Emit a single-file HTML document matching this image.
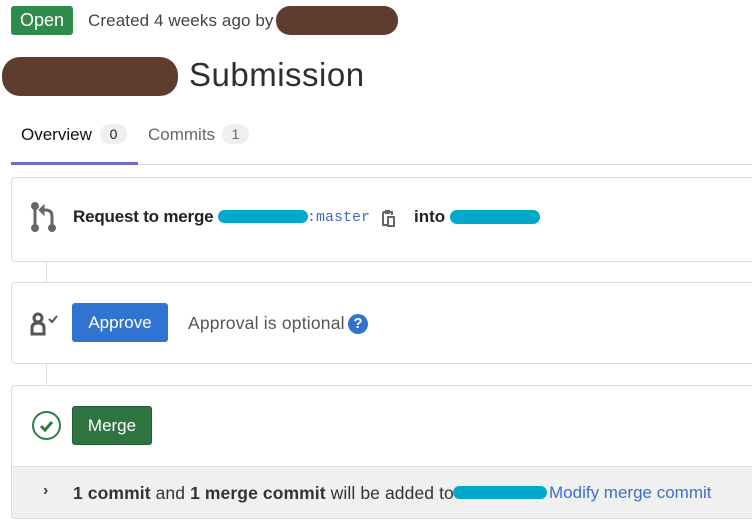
<!DOCTYPE html>
<html><head><meta charset="utf-8"><style>
body{margin:0;width:752px;height:523px;background:#fff;font-family:"Liberation Sans",sans-serif;position:relative;overflow:hidden;color:#2e2e2e}
.a{position:absolute;white-space:nowrap}
.card{position:absolute;left:11px;width:760px;border:1px solid #dcdcdc;border-radius:4px;background:#fff}
</style></head><body>
<div class="a" style="left:11px;top:6px;width:62px;height:29px;background:#2f8a4c;border-radius:3px;color:#fff;font-size:18px;line-height:29px;text-align:center">Open</div>
<div class="a" style="left:88px;top:11px;font-size:17px;color:#444;letter-spacing:0.1px">Created 4 weeks ago by</div>
<div class="a" style="left:276px;top:6px;width:122px;height:29px;background:#5e3c30;border-radius:14px"></div>
<div class="a" style="left:2px;top:57px;width:176px;height:39px;background:#5e3c30;border-radius:18px"></div>
<div class="a" style="left:189px;top:56px;font-size:33px;color:#2e2e2e;letter-spacing:0.5px">Submission</div>
<div class="a" style="left:21px;top:125px;font-size:17px;color:#111">Overview</div>
<div class="a" style="left:100px;top:124px;width:27px;height:20px;background:#efefef;border-radius:10px;font-size:14px;line-height:20px;text-align:center;color:#222">0</div>
<div class="a" style="left:148px;top:125px;font-size:17px;color:#666">Commits</div>
<div class="a" style="left:222px;top:124px;width:27px;height:20px;background:#efefef;border-radius:10px;font-size:14px;line-height:20px;text-align:center;color:#666">1</div>
<div class="a" style="left:11px;top:164px;width:741px;height:1px;background:#ddd"></div>
<div class="a" style="left:11px;top:162px;width:127px;height:3px;background:#6e6acc"></div>

<div class="card" style="top:177px;height:83px"></div>
<svg class="a" style="left:30px;top:202px" width="28" height="30" viewBox="0 0 28 30"><g stroke="#666" stroke-width="3" fill="#666" stroke-linecap="round"><line x1="5" y1="4" x2="5" y2="26"/><circle cx="5" cy="4" r="2.5"/><circle cx="5" cy="26" r="2.5"/><path d="M22 26V14Q22 8 15 8" fill="none"/><circle cx="22" cy="26" r="2.5"/><path d="M14 3L14 13L9 8Z" stroke-width="1"/></g></svg>
<div class="a" style="left:73px;top:207px;font-size:17px;font-weight:bold;color:#222;letter-spacing:-0.2px">Request to merge</div>
<div class="a" style="left:218px;top:210px;width:90px;height:13px;background:#00a8cc;border-radius:7px"></div>
<div class="a" style="left:307px;top:209px;font-family:'Liberation Mono',monospace;font-size:15px;color:#3b6fc4">:master</div>
<svg class="a" style="left:380px;top:208px" width="16" height="20"><path d="M3 4h3M10 4h2v3M3 4v13h4" stroke="#666" stroke-width="2" fill="none"/><rect x="5" y="2" width="5" height="4" fill="#666"/><rect x="8" y="9" width="6" height="9" stroke="#666" stroke-width="2" fill="none"/></svg>
<div class="a" style="left:414px;top:207px;font-size:17px;font-weight:bold;color:#222">into</div>
<div class="a" style="left:450px;top:210px;width:90px;height:14px;background:#00a8cc;border-radius:7px"></div>

<div class="a" style="left:46px;top:261px;width:1px;height:21px;background:#ddd"></div>
<div class="card" style="top:282px;height:80px"></div>
<svg class="a" style="left:30px;top:312px" width="30" height="24"><circle cx="8" cy="6" r="4" fill="none" stroke="#555" stroke-width="3"/><path d="M2 22V16Q2 11 8 11Q14 11 14 16V22Z" fill="none" stroke="#555" stroke-width="3"/><path d="M19 7l3 3 5-6" fill="none" stroke="#555" stroke-width="2"/></svg>
<div class="a" style="left:72px;top:303px;width:96px;height:39px;background:#3173d1;border-radius:3px;color:#fff;font-size:17px;line-height:40px;text-align:center">Approve</div>
<div class="a" style="left:188px;top:313px;font-size:17.5px;color:#555;letter-spacing:0.2px">Approval is optional</div>
<div class="a" style="left:348px;top:314px;width:20px;height:20px;border-radius:50%;background:#3173d1;color:#fff;font-weight:bold;font-size:15px;line-height:20px;text-align:center">?</div>

<div class="a" style="left:46px;top:363px;width:1px;height:22px;background:#ddd"></div>
<div class="card" style="top:385px;height:132px;overflow:hidden">
<div class="a" style="left:0;top:80px;width:100%;height:52px;background:#f0f0f0;border-top:1px solid #ddd"></div>
</div>
<svg class="a" style="left:31px;top:410px" width="31" height="31"><circle cx="15.5" cy="15.5" r="13.5" fill="none" stroke="#2f7d45" stroke-width="2"/><path d="M10 16l4 4 7-8" fill="none" stroke="#2f7d45" stroke-width="3"/></svg>
<div class="a" style="left:72px;top:406px;width:78px;height:37px;background:#2f7440;border:1px solid #245d33;border-radius:3px;color:#fff;font-size:17px;line-height:38px;text-align:center">Merge</div>
<div class="a" style="left:43px;top:482px;font-size:16px;color:#444;font-weight:bold">›</div>
<div class="a" style="left:73px;top:483px;font-size:17.5px;color:#333;letter-spacing:0.1px"><b>1 commit</b> and <b>1 merge commit</b> will be added to</div>
<div class="a" style="left:453px;top:486px;width:94px;height:13px;background:#00a8cc;border-radius:7px"></div>
<div class="a" style="left:549px;top:483px;font-size:17px;color:#3f6fc9">Modify merge commit</div>
</body></html>
